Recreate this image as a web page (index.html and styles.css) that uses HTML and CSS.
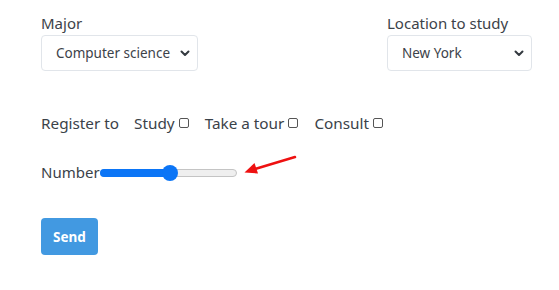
FILE: index.html
```html
<!DOCTYPE html>
<html>
<head>
<meta charset="utf-8">
<link rel="stylesheet" href="styles.css">
</head>
<body>
<form class="form">
  <div class="top-row">
    <div class="field">
      <label class="label">Major</label>
      <div class="select major">
        <span>Computer science</span>
        <svg class="chev" width="10" height="8" viewBox="0 0 10 8"><path d="M1.5 2.5 L5 6 L8.5 2.5" fill="none" stroke="#343a40" stroke-width="2" stroke-linecap="round" stroke-linejoin="round"/></svg>
      </div>
    </div>
    <div class="field">
      <label class="label">Location to study</label>
      <div class="select location">
        <span>New York</span>
        <svg class="chev" width="10" height="8" viewBox="0 0 10 8"><path d="M1.5 2.5 L5 6 L8.5 2.5" fill="none" stroke="#343a40" stroke-width="2" stroke-linecap="round" stroke-linejoin="round"/></svg>
      </div>
    </div>
  </div>

  <div class="register-row">
    <span class="reg-label">Register to</span>
    <label class="opt">Study<span class="box"></span></label>
    <label class="opt">Take a tour<span class="box"></span></label>
    <label class="opt">Consult<span class="box"></span></label>
  </div>

  <div class="number-row">
    <span class="num-label">Number</span>
    <div class="slider">
      <div class="fill"></div>
      <div class="thumb"></div>
    </div>
    <svg class="arrow" width="60" height="24" viewBox="0 0 60 24">
      <path d="M54 3 L14 15" stroke="#ee1111" stroke-width="2.5" stroke-linecap="round" fill="none"/>
      <path d="M3.5 18.5 L13.5 9 L17 19.5 Z" fill="#ee1111"/>
    </svg>
  </div>

  <button type="button" class="send">Send</button>
</form>
</body>
</html>
```
FILE: styles.css
```css
html, body {
  margin: 0;
  padding: 0;
  background: #fff;
}
body {
  font-family: "Segoe UI", "Noto Sans", "Open Sans", sans-serif;
  color: #3b4249;
}
.form {
  padding: 11px 27px 0 41px;
}
.top-row {
  display: flex;
  justify-content: space-between;
}
.field {
  display: flex;
  flex-direction: column;
}
.label {
  font-size: 15px;
  line-height: 24px;
  color: #3c4249;
}
.select {
  box-sizing: border-box;
  height: 36px;
  border: 1px solid #e1e5ea;
  border-radius: 4px;
  display: flex;
  align-items: center;
  justify-content: space-between;
  padding: 0 7px 0 14px;
  font-size: 13.5px;
  color: #3c4249;
}
.major { width: 157px; }
.location { width: 145px; }
.chev { flex: none; }

.register-row {
  margin-top: 40px;
  display: flex;
  align-items: center;
  height: 24px;
  font-size: 15.3px;
}
.reg-label { margin-right: 15px; }
.opt {
  display: flex;
  align-items: center;
  margin-right: 16px;
}
.box {
  display: inline-block;
  box-sizing: border-box;
  width: 10px;
  height: 10px;
  border: 1px solid #555;
  border-radius: 2px;
  margin-left: 4px;
}

.number-row {
  margin-top: 25px;
  display: flex;
  align-items: center;
  height: 24px;
  font-size: 15px;
  position: relative;
}
.slider {
  position: relative;
  width: 137px;
  height: 8px;
  box-sizing: border-box;
  border: 1px solid #c4c4c4;
  background: #efefef;
  border-radius: 4px;
  margin-top: 1px;
}
.fill {
  position: absolute;
  left: -1px;
  top: -1px;
  bottom: -1px;
  width: 66px;
  background: #0b75f6;
  border-radius: 4px 0 0 4px;
}
.thumb {
  position: absolute;
  left: 61px;
  top: 50%;
  width: 16px;
  height: 16px;
  margin-top: -8px;
  border-radius: 50%;
  background: #0b75f6;
}
.arrow {
  position: absolute;
  left: 200px;
  top: -6px;
}

.send {
  margin-top: 34px;
  width: 57px;
  height: 37px;
  border: none;
  border-radius: 4px;
  background: #4299e1;
  color: #fff;
  font-family: "Segoe UI", "Noto Sans", "Open Sans", sans-serif;
  font-weight: 700;
  font-size: 13.5px;
  padding: 0;
}
```
